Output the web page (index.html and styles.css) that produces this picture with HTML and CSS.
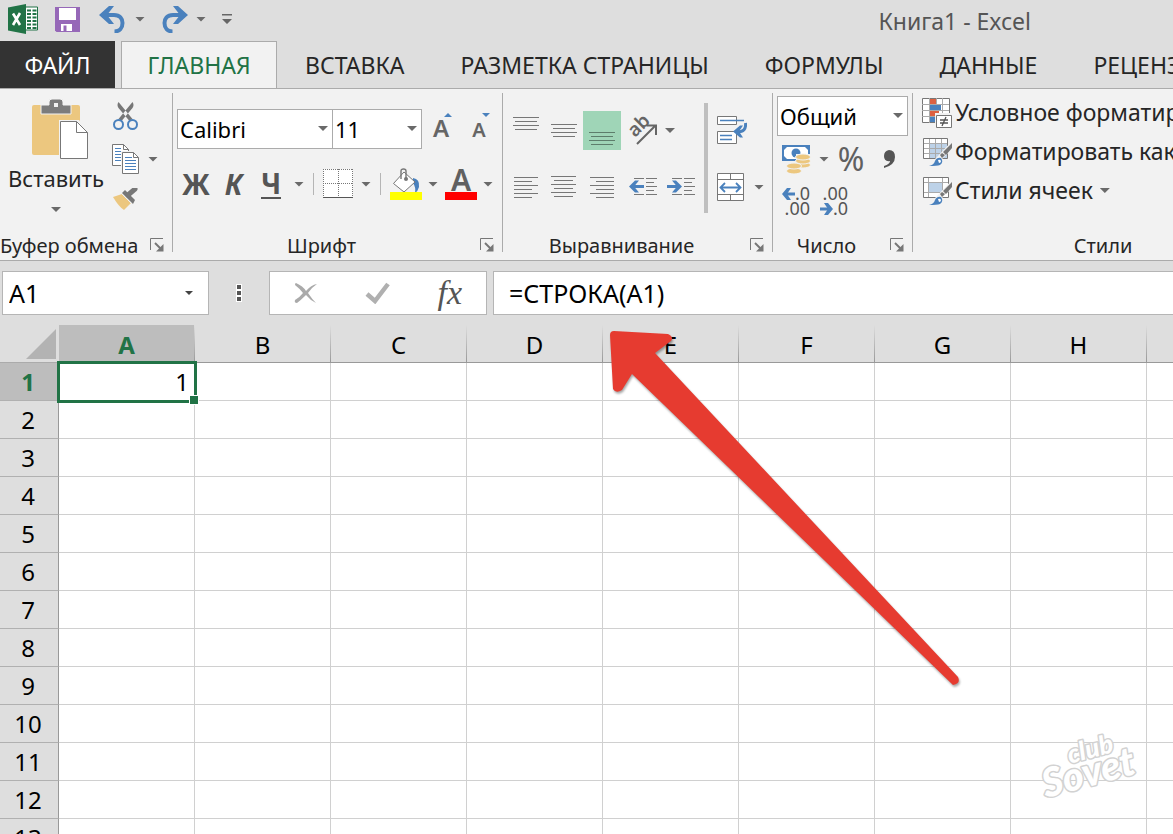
FILE: index.html
```html
<!DOCTYPE html>
<html lang="ru">
<head>
<meta charset="utf-8">
<title>Книга1 - Excel</title>
<link rel="stylesheet" href="styles.css">
</head>
<body>
<header class="titlebar">
  <div class="quick">
    <svg class="logo" width="30" height="30" viewBox="0 0 30 30" aria-hidden="true"><path d="M17 3h12.500v23H17z" fill="#fff" stroke="#217346"/><path d="M19 6.500h4M24.500 6.500h4M19 10h4M24.500 10h4M19 13.500h4M24.500 13.500h4M19 17h4M24.500 17h4M19 20.500h4M24.500 20.500h4M19 24h4M24.500 24h4" stroke="#217346" stroke-width="2"/><path d="M0 3.500 18 0v30L0 26.500z" fill="#217346"/><path d="m5 9.500 7 11.500M12 9 5 21" stroke="#fff" stroke-width="2.600"/></svg>
    <button class="icon-btn save" aria-label="Сохранить"><svg width="25" height="25" viewBox="0 0 25 25"><path d="M0 0h25v25H1.500L0 23.500z" fill="#9668b8"/><path d="M4 1h17v12H4zM6 17h11v7H6z" fill="#fff"/><path d="M8.500 18.500h3V24h-3z" fill="#9668b8"/></svg></button>
    <button class="icon-btn undo" aria-label="Отменить"><svg width="27" height="27" viewBox="0 0 27 27"><path d="M5 9h10c6 0 8.500 3.500 8.500 8 0 5-3 8.500-8 8.500" fill="none" stroke="#4a81bd" stroke-width="4"/><path d="m0 9 10-9h5L8 9l7 9h-5z" fill="#4a81bd"/></svg></button>
    <button class="icon-btn" aria-label="Список отмены"><i class="caret"></i></button>
    <button class="icon-btn redo" aria-label="Вернуть"><svg width="27" height="27" viewBox="0 0 27 27"><path d="M22 9H12c-6 0-8.500 3.500-8.500 8 0 5 3 8.500 8 8.500" fill="none" stroke="#4a81bd" stroke-width="4"/><path d="m27 9-10-9h-5l7 9-7 9h5z" fill="#4a81bd"/></svg></button>
    <button class="icon-btn" aria-label="Список возврата"><i class="caret"></i></button>
    <button class="icon-btn custom" aria-label="Настройка панели"><svg width="10" height="10" viewBox="0 0 10 10"><path d="M0 0h10v1.500H0zM0 5h10L5 10z" fill="#666"/></svg></button>
  </div>
  <h1 class="title">Книга1 - Excel</h1>
</header>
<nav class="tabs">
  <button class="tab file">ФАЙЛ</button>
  <button class="tab active">ГЛАВНАЯ</button>
  <button class="tab">ВСТАВКА</button>
  <button class="tab">РАЗМЕТКА СТРАНИЦЫ</button>
  <button class="tab">ФОРМУЛЫ</button>
  <button class="tab">ДАННЫЕ</button>
  <button class="tab">РЕЦЕНЗИРОВАНИЕ</button>
</nav>
<main class="app">
<div class="ribbon">
  <section class="group clipboard">
    <div class="tools">
      <button class="paste">
        <svg width="56" height="60" viewBox="0 0 56 60" aria-hidden="true"><path d="M2 6h44q2 0 2 2v48H2q-2 0-2-2V8q0-2 2-2z" fill="#ecc77f"/><path d="M9 15V6h8V3q0-3 3-3h8q3 0 3 3v3h8v9z" fill="#7c7c7c" stroke="#f2f2f2" stroke-width="1"/><path d="M22 4h4v4h-4z" fill="#f2f2f2"/><path d="M27 21h20l10 11v29H27z" fill="#f2f2f2"/><path d="M28.500 22.500h16l11 11v26h-27z" fill="#fff" stroke="#777"/><path d="M44.500 22.500v11h11" fill="none" stroke="#777"/></svg>
        <span>Вставить</span><i class="caret"></i>
      </button>
      <div class="clip-side">
        <button class="icon-btn" aria-label="Вырезать"><svg width="25" height="28" viewBox="0 0 25 28"><path d="M5.500 0q-2 3 0 6l11 13 3-2zM19.500 0q2 3 0 6l-11 13-3-2z" fill="#777"/><circle cx="5.500" cy="22.500" r="4.500" fill="#f2f2f2" stroke="#4a81bd" stroke-width="2"/><circle cx="19.500" cy="22.500" r="4.500" fill="#f2f2f2" stroke="#4a81bd" stroke-width="2"/></svg></button>
        <button class="icon-btn copy" aria-label="Копировать"><svg width="27" height="30" viewBox="0 0 27 30"><path d="M.5.5h11l5 5v16H.5z" fill="#fff" stroke="#777"/><path d="M11.500.5v5h5" fill="none" stroke="#777"/><path d="M3 4.500h6M3 7.500h6M3 10.500h6M3 13.500h6M3 16.500h6" stroke="#4a81bd"/><path d="M9 7h15v3h3v20H9z" fill="#f2f2f2"/><path d="M10.500 8.500h11l5 5v16h-16z" fill="#fff" stroke="#777"/><path d="M21.500 8.500v5h5" fill="none" stroke="#777"/><path d="M13 13.500h7M13 16.500h11M13 19.500h11M13 22.500h11M13 25.500h11" stroke="#4a81bd"/></svg><i class="caret"></i></button>
        <button class="icon-btn" aria-label="Формат по образцу"><svg width="25" height="22" viewBox="0 0 25 22"><path d="m0 9 9-3 9 9-7 7q-5-3-11-13z" fill="#ecc77f"/><path d="m9 5 3-3 10 10-2 4z" fill="#777"/><path d="m15 7 7-6" stroke="#777" stroke-width="5" stroke-linecap="round"/><path d="m9 6 9 9" stroke="#f2f2f2"/></svg></button>
      </div>
    </div>
    <footer class="caption"><span>Буфер обмена</span><button class="icon-btn launch" aria-label="Параметры буфера"><svg width="14" height="14" viewBox="0 0 14 14"><path d="M.5 12V.5H13" fill="none" stroke="#777"/><path d="m5 5 6 6" stroke="#777" stroke-width="2"/><path d="M13.500 6v7.500H6z" fill="#777"/></svg></button></footer>
  </section>

  <section class="group font">
    <div class="tools">
      <div class="font-top">
        <label class="combo"><select aria-label="Шрифт"><option>Calibri</option></select><i class="caret"></i></label>
        <label class="combo size"><select aria-label="Размер шрифта"><option>11</option></select><i class="caret"></i></label>
        <button class="icon-btn grow" aria-label="Увеличить размер"><b>A</b><svg width="8" height="4" viewBox="0 0 8 4"><path d="m0 4 4-4 4 4z" fill="#4a81bd"/></svg></button>
        <button class="icon-btn grow shrink" aria-label="Уменьшить размер"><b>A</b><svg width="8" height="4" viewBox="0 0 8 4"><path d="m0 0 4 4 4-4z" fill="#4a81bd"/></svg></button>
      </div>
      <div class="font-bottom">
        <button class="letter">Ж</button>
        <button class="letter italic">К</button>
        <button class="letter under">Ч</button>
        <button class="icon-btn" aria-label="Вид подчеркивания"><i class="caret"></i></button>
        <i class="sep"></i>
        <button class="icon-btn" aria-label="Границы"><svg width="30" height="30" viewBox="0 0 30 30"><path d="M0 0h30v29H0z" fill="#fff"/><path d="M0 .5h30M0 14.500h30M.5 0v29M15.500 0v29M29.500 0v29" stroke="#777" stroke-dasharray="1 1"/><path d="M0 28.500h30" stroke="#555"/></svg></button>
        <button class="icon-btn" aria-label="Виды границ"><i class="caret"></i></button>
        <i class="sep"></i>
        <button class="icon-btn" aria-label="Цвет заливки"><svg width="32" height="32" viewBox="0 0 32 32"><path d="M23 10q7 1 6 9-1 4-4 6 1-6-2-10z" fill="#4a81bd"/><path d="m14 4 11 10-11 10L3.500 15.500z" fill="#fff" stroke="#777"/><path d="M11 11V3q0-2 2.500-2T16 3v7" fill="none" stroke="#777" stroke-width="1.400"/><circle cx="16" cy="11" r="2" fill="#777"/><path d="M0 24h32v8H0z" fill="#ff0"/></svg></button>
        <button class="icon-btn" aria-label="Выбор заливки"><i class="caret"></i></button>
        <button class="icon-btn color" aria-label="Цвет текста"><b>A</b></button>
        <button class="icon-btn" aria-label="Выбор цвета"><i class="caret"></i></button>
      </div>
    </div>
    <footer class="caption"><span>Шрифт</span><button class="icon-btn launch" aria-label="Параметры шрифта"><svg width="14" height="14" viewBox="0 0 14 14"><path d="M.5 12V.5H13" fill="none" stroke="#777"/><path d="m5 5 6 6" stroke="#777" stroke-width="2"/><path d="M13.500 6v7.500H6z" fill="#777"/></svg></button></footer>
  </section>

  <section class="group align">
    <div class="tools align-tools">
      <div class="align-left">
        <div class="align-row">
          <button class="icon-btn" aria-label="По верхнему краю"><svg width="26" height="30" viewBox="0 0 26 30"><path d="M0 1.500h26M2 5.500h22M0 9.500h26M2 13.500h22" stroke="#777"/></svg></button>
          <button class="icon-btn" aria-label="По середине"><svg width="26" height="30" viewBox="0 0 26 30"><path d="M0 8.500h26M2 12.500h22M0 16.500h26M2 20.500h22" stroke="#777"/></svg></button>
          <button class="icon-btn pressed" aria-label="По нижнему краю"><svg width="26" height="30" viewBox="0 0 26 30"><path d="M0 16.500h26M2 20.500h22M0 24.500h26M2 28.500h22" stroke="#5d7d6b"/></svg></button>
          <button class="icon-btn" aria-label="Ориентация"><svg width="30" height="30" viewBox="0 0 30 30"><text class="ab" x="7" y="22" transform="rotate(-45 7 22)">ab</text><path d="M9 28 27 10M19 9.500h9V19" fill="none" stroke="#666" stroke-width="2"/></svg></button>
          <button class="icon-btn drop" aria-label="Выбор ориентации"><i class="caret"></i></button>
        </div>
        <div class="align-row">
          <button class="icon-btn" aria-label="По левому краю"><svg width="26" height="24" viewBox="0 0 26 24"><path d="M1 1.500h24M1 5.500h18M1 9.500h24M1 13.500h18M1 17.500h24M1 21.500h18" stroke="#777"/></svg></button>
          <button class="icon-btn" aria-label="По центру"><svg width="26" height="24" viewBox="0 0 26 24"><path d="M0 .5h25M3 4.500h19M0 8.500h25M3 12.500h19M0 16.500h25M3 20.500h19" stroke="#777"/></svg></button>
          <button class="icon-btn" aria-label="По правому краю"><svg width="26" height="24" viewBox="0 0 26 24"><path d="M1 1.500h24M7 5.500h18M1 9.500h24M7 13.500h18M1 17.500h24M7 21.500h18" stroke="#777"/></svg></button>
          <button class="icon-btn" aria-label="Уменьшить отступ"><svg width="30" height="24" viewBox="0 0 30 24"><path d="M6 2.500h10M18 2.500h11M18 6.500h8M18 10.500h11M18 14.500h8M6 18.500h10M18 18.500h11" stroke="#777"/><path d="M3 10.500h13" stroke="#4a81bd" stroke-width="3"/><path d="m1 10.500 6-6h4l-5 6 5 6H7z" fill="#4a81bd"/></svg></button>
          <button class="icon-btn" aria-label="Увеличить отступ"><svg width="30" height="24" viewBox="0 0 30 24"><path d="M6 2.500h10M18 2.500h11M18 6.500h8M18 10.500h11M18 14.500h8M6 18.500h10M18 18.500h11" stroke="#777"/><path d="M1 10.500h13" stroke="#4a81bd" stroke-width="3"/><path d="m16 10.500-6-6H6l5 6-5 6h4z" fill="#4a81bd"/></svg></button>
        </div>
      </div>
      <i class="divider"></i>
      <div class="align-right">
        <button class="icon-btn" aria-label="Перенести текст"><svg width="30" height="29" viewBox="0 0 30 29"><path d="M.5.500h19v8H.5zM.5 15.500h19v12H.5z" fill="#fff" stroke="#777"/><path d="M3 4.500h24M3 19.500h12M3 23.500h12" stroke="#4a81bd" stroke-width="1.400"/><path d="M28.500 7q1 9-8 9" fill="none" stroke="#4a81bd" stroke-width="3"/><path d="m16 15.500 7-6h3l-4 6 4 6h-3z" fill="#4a81bd"/></svg></button>
        <button class="icon-btn merge" aria-label="Объединить"><svg width="27" height="28" viewBox="0 0 27 28"><path d="M.5.500h26v27H.5zM.5 6.500h26M.5 21.500h26M13.500.5v6M13.500 21.500v6" fill="#fff" stroke="#777"/><path d="M4 14.500h19M8 10l-4.500 4.500L8 19M19 10l4.500 4.500L19 19" fill="none" stroke="#4a81bd" stroke-width="1.800"/></svg><i class="caret"></i></button>
      </div>
    </div>
    <footer class="caption"><span>Выравнивание</span><button class="icon-btn launch" aria-label="Параметры выравнивания"><svg width="14" height="14" viewBox="0 0 14 14"><path d="M.5 12V.5H13" fill="none" stroke="#777"/><path d="m5 5 6 6" stroke="#777" stroke-width="2"/><path d="M13.500 6v7.500H6z" fill="#777"/></svg></button></footer>
  </section>

  <section class="group number">
    <div class="tools">
      <label class="combo"><select aria-label="Числовой формат"><option>Общий</option></select><i class="caret"></i></label>
      <div class="number-row">
        <button class="icon-btn money" aria-label="Финансовый формат"><svg width="29" height="29" viewBox="0 0 29 29"><path d="M0 0h28v16H0z" fill="#4a81bd"/><path d="M5 2h18l3 3v6l-3 3H5l-3-3V5z" fill="#fff"/><circle cx="14" cy="8" r="4.500" fill="#4a81bd"/><path d="M14 9h15v13h-9v7H5V17h9z" fill="#f2f2f2"/><g fill="#ecc77f" stroke="#f2f2f2"><ellipse cx="21" cy="20" rx="7.500" ry="3"/><ellipse cx="21" cy="16" rx="7.500" ry="3"/><ellipse cx="21" cy="12" rx="7.500" ry="3"/><ellipse cx="12" cy="26" rx="7.500" ry="3"/><ellipse cx="12" cy="21" rx="7.500" ry="3"/></g></svg><i class="caret"></i></button>
        <button class="icon-btn percent">%</button>
        <button class="icon-btn" aria-label="Формат с разделителями"><svg width="13" height="19" viewBox="0 0 13 19"><path d="M6 0q6 0 6 7 0 8-11 11v-2q6-2 6-5-6 1-6-5 0-5 5-6z" fill="#555"/></svg></button>
      </div>
      <div class="decimals">
        <button class="icon-btn dec"><span><svg width="13" height="12" viewBox="0 0 13 12"><path d="M2 6h11" stroke="#4a81bd" stroke-width="3"/><path d="m0 6 5-6h4L5 6l4 6H5z" fill="#4a81bd"/></svg>.0</span><span>.00</span></button>
        <button class="icon-btn dec"><span>.00</span><span><svg width="13" height="12" viewBox="0 0 13 12"><path d="M0 6h11" stroke="#4a81bd" stroke-width="3"/><path d="M13 6 8 0H4l4 6-4 6h4z" fill="#4a81bd"/></svg>.0</span></button>
      </div>
    </div>
    <footer class="caption"><span>Число</span><button class="icon-btn launch" aria-label="Параметры числа"><svg width="14" height="14" viewBox="0 0 14 14"><path d="M.5 12V.5H13" fill="none" stroke="#777"/><path d="m5 5 6 6" stroke="#777" stroke-width="2"/><path d="M13.500 6v7.500H6z" fill="#777"/></svg></button></footer>
  </section>

  <section class="group styles">
    <div class="tools">
      <button class="style-btn"><svg width="30" height="30" viewBox="0 0 30 30" aria-hidden="true"><path d="M.5.500h27v24H.5z" fill="#fff" stroke="#777"/><path d="M7.500 0v25M14.500 0v25M20.500 0v25M0 6.500h27M0 12.500h27M0 18.500h27" stroke="#aaa"/><path d="M8 1h6v5H8zM8 13h9v5H8z" fill="#dc6141"/><path d="M8 7h11v5H8zM8 19h6v5H8z" fill="#4a81bd"/><path d="M13 15h17v15H13z" fill="#f2f2f2"/><path d="M14.500 17.500h15v12h-15z" fill="#fff" stroke="#777"/><path d="M18 22h8M18 25h8M24 19l-4 9" stroke="#555" stroke-width="1.300"/></svg><span>Условное форматирование</span></button>
      <button class="style-btn"><svg width="30" height="30" viewBox="0 0 30 30" aria-hidden="true"><path d="M1.500 1.500h24v20h-24z" fill="#fff" stroke="#777"/><path d="M7 7h18v14H7z" fill="#bdd2e8"/><path d="M7.500 2v19M13.500 2v19M19.500 2v19M2 6.500h23M2 11.500h23M2 16.500h23" stroke="#aaa"/><path d="M30 4v8L19 23q-3 6-13 6l8-8z" fill="#f2f2f2"/><path d="m30 6-9 9 3 3 6-7zM20 16l-2 2 2 3 3-3z" fill="#777"/><path d="M7 29q5-1 6-5 2-4 6-3 3 4-1 7-3 1-11 1z" fill="#4a81bd"/><path d="M16 23q2-1 3 1 0 2-2 2z" fill="#fff"/></svg><span>Форматировать как таблицу</span></button>
      <button class="style-btn"><svg width="30" height="30" viewBox="0 0 30 30" aria-hidden="true"><path d="M1.500 1.500h25v20h-25z" fill="#fff" stroke="#777"/><path d="M7 6h14v11H7z" fill="#bdd2e8"/><path d="M6.500 2v19M20.500 2v19M2 6.500h24M2 16.500h24" stroke="#aaa"/><path d="M30 4v8L19 23q-3 6-13 6l8-8z" fill="#f2f2f2"/><path d="m30 6-9 9 3 3 6-7zM20 16l-2 2 2 3 3-3z" fill="#777"/><path d="M7 29q5-1 6-5 2-4 6-3 3 4-1 7-3 1-11 1z" fill="#4a81bd"/><path d="M16 23q2-1 3 1 0 2-2 2z" fill="#fff"/></svg><span>Стили ячеек</span><i class="caret"></i></button>
    </div>
    <footer class="caption"><span>Стили</span></footer>
  </section>
</div>

<div class="formula-bar">
  <div class="namebox"><input aria-label="Имя ячейки" value="A1"><button class="icon-btn" aria-label="Список имен"><i class="caret dark"></i></button></div>
  <svg class="grip" width="6" height="18" viewBox="0 0 6 18" aria-hidden="true"><path d="M0 0h6v18H0z" fill="#fff"/><path d="M1 1h4v4H1zM1 7h4v4H1zM1 13h4v4H1z" fill="#555"/></svg>
  <div class="entry">
    <button class="icon-btn" aria-label="Отмена"><svg width="24" height="22" viewBox="0 0 24 22"><path d="M2 1q7 3 10 8Q17 3 23 2q-6 4-9 9 4 6 8 10-6-3-10-8-5 5-9 8-3 0-2-3 5-3 8-7-4-5-8-8 0-2 1-2z" fill="#aaa"/></svg></button>
    <button class="icon-btn" aria-label="Ввод"><svg width="26" height="22" viewBox="0 0 26 22"><path d="m2 12 8 7L23 2" fill="none" stroke="#b0b0b0" stroke-width="4.500"/></svg></button>
    <button class="icon-btn fx">fx</button>
  </div>
  <input class="formula" aria-label="Строка формул" value="=СТРОКА(A1)">
</div>

<div class="sheet">
<table>
<colgroup><col class="col-num"><col><col><col><col><col><col><col><col><col></colgroup>
<thead><tr><th class="corner"><svg width="30" height="30" viewBox="0 0 30 30" aria-hidden="true"><path d="M30 0v30H0z" fill="#b3b3b3"/></svg></th><th class="on">A</th><th>B</th><th>C</th><th>D</th><th>E</th><th>F</th><th>G</th><th>H</th><th>I</th></tr></thead>
<tbody>
<tr><th class="on">1</th><td class="cell-on">1<i class="handle"></i></td><td></td><td></td><td></td><td></td><td></td><td></td><td></td><td></td></tr>
<tr><th>2</th><td></td><td></td><td></td><td></td><td></td><td></td><td></td><td></td><td></td></tr>
<tr><th>3</th><td></td><td></td><td></td><td></td><td></td><td></td><td></td><td></td><td></td></tr>
<tr><th>4</th><td></td><td></td><td></td><td></td><td></td><td></td><td></td><td></td><td></td></tr>
<tr><th>5</th><td></td><td></td><td></td><td></td><td></td><td></td><td></td><td></td><td></td></tr>
<tr><th>6</th><td></td><td></td><td></td><td></td><td></td><td></td><td></td><td></td><td></td></tr>
<tr><th>7</th><td></td><td></td><td></td><td></td><td></td><td></td><td></td><td></td><td></td></tr>
<tr><th>8</th><td></td><td></td><td></td><td></td><td></td><td></td><td></td><td></td><td></td></tr>
<tr><th>9</th><td></td><td></td><td></td><td></td><td></td><td></td><td></td><td></td><td></td></tr>
<tr><th>10</th><td></td><td></td><td></td><td></td><td></td><td></td><td></td><td></td><td></td></tr>
<tr><th>11</th><td></td><td></td><td></td><td></td><td></td><td></td><td></td><td></td><td></td></tr>
<tr><th>12</th><td></td><td></td><td></td><td></td><td></td><td></td><td></td><td></td><td></td></tr>
<tr><th>13</th><td></td><td></td><td></td><td></td><td></td><td></td><td></td><td></td><td></td></tr>
</tbody>
</table>
<svg class="pointer" width="360" height="370" viewBox="600 320 360 370" aria-hidden="true"><path d="M614 331 668 334q6 3 3 7l-16 12L958 677q3 7-5 8L632 374l-10 16q-6 4-9-1l-3-54q0-4 4-4z" fill="#e63b30"/></svg>
<svg class="watermark" width="110" height="76" viewBox="0 0 110 76" aria-label="club Sovet"><g transform="rotate(-15 12 68)"><text class="sovet" x="12" y="68">Sovet</text><text class="club" x="44" y="41">club</text></g></svg>
</div>
</main>
</body>
</html>
```
FILE: styles.css
```css
* { box-sizing: border-box; }
body {
  margin: 0;
  height: 100vh;
  display: flex;
  flex-direction: column;
  overflow: hidden;
  background: #dedede;
  color: #262626;
  font-family: "Noto Sans", "Open Sans", sans-serif;
  font-size: 22px;
}
button, input, select { font: inherit; color: inherit; border: 0; padding: 0; margin: 0; background: none; border-radius: 0; }
svg { display: block; flex: none; }
.icon-btn { display: flex; align-items: center; justify-content: center; flex: none; }
.caret { display: block; flex: none; width: 10px; height: 5px; background: #6a6a6a; clip-path: polygon(0 0, 100% 0, 50% 100%); }
.caret.dark { width: 8px; height: 4px; background: #444; }

.titlebar { display: flex; justify-content: space-between; height: 41px; flex: none; padding: 0 142px 0 8px; }
.quick { display: flex; align-items: center; height: 38px; }
.save { margin-left: 17px; }
.undo { margin: 0 9px 0 19px; }
.redo { margin: 0 8px 0 16px; }
.custom { margin-left: 16px; }
.title { margin: 0; font-size: 23px; font-weight: 400; line-height: 43px; color: #555; white-space: nowrap; }

.tabs { display: flex; flex: none; height: 48px; overflow: hidden; border-bottom: 1px solid #ababab; font-size: 23px; }
.tab { flex: none; padding: 0 28px; line-height: 48px; white-space: nowrap; }
.tab.file { width: 115px; padding: 0; margin-right: 6px; background: #333; color: #fff; }
.tab.active { width: 156px; padding: 0; line-height: 46px; background: #f2f2f2; border: 1px solid #ababab; border-bottom: 0; color: #217346; }

.app { flex: 1; min-height: 0; display: flex; flex-direction: column; }
.ribbon { display: flex; flex: none; height: 172px; overflow: hidden; background: #f2f2f2; border-bottom: 1px solid #ababab; }
.group { flex: none; display: flex; flex-direction: column; position: relative; padding-bottom: 1px; }
.group::after { content: ""; position: absolute; right: 0; top: 4px; bottom: 8px; width: 1px; background: #ababab; }
.tools { flex: 1; }
.caption { display: flex; align-items: center; height: 28px; font-size: 20px; white-space: nowrap; }
.caption span { flex: 1; text-align: center; }
.launch { margin: 0 9px 0 10px; }
.styles .caption { font-size: 20px; }

.clipboard { width: 173px; }
.clipboard .tools { display: flex; }
.clipboard .caption span { text-align: left; }
.paste { width: 112px; display: flex; flex-direction: column; align-items: center; padding-top: 10px; }
.paste span { line-height: 38px; }
.paste .caret { margin-top: 10px; }
.paste svg { margin-left: 8px; }
.clip-side { display: flex; flex-direction: column; align-items: flex-start; gap: 14px; padding-top: 13px; }
.clip-side .icon-btn { min-width: 27px; }
.copy { gap: 9px; }

.font { width: 330px; }
.font-top { display: flex; padding: 20px 0 0 4px; }
.combo { position: relative; display: block; width: 156px; height: 40px; flex: none; }
.combo select { appearance: none; width: 100%; height: 100%; padding-left: 2px; background: #fff; border: 1px solid #ababab; color: #000; }
.combo .caret { position: absolute; right: 5px; top: 17px; pointer-events: none; }
.combo.size { width: 90px; margin-left: -1px; }
.grow { width: 22px; height: 30px; margin-left: 8px; align-items: flex-start; position: relative; }
.grow b { font-size: 24px; line-height: 38px; font-weight: 600; color: #666; }
.grow svg { position: absolute; right: 0; top: 4px; }
.shrink { margin-left: 16px; }
.shrink b { font-size: 20px; line-height: 42px; }
.font-bottom { display: grid; grid-template-columns: 38px 37px 38px 18px 10px 40px 16px 12px 40px 14px 42px 12px; align-items: center; justify-items: center; height: 38px; margin-top: 16px; padding-left: 4px; }
.letter { font-weight: 700; font-size: 28px; line-height: 32px; color: #555; }
.italic { font-style: italic; }
.under { border-bottom: 2px solid #555; line-height: 28px; }
.sep { width: 1px; height: 22px; background: #b5b5b5; }
.color { width: 32px; height: 32px; border-bottom: 8px solid #f00; }
.color b { font-size: 30px; line-height: 24px; font-weight: 600; color: #606060; }

.align { width: 270px; }
.align-tools { display: flex; }
.align-left { width: 198px; padding: 22px 0 0 4px; display: flex; flex-direction: column; gap: 18px; }
.align-row { display: grid; grid-template-columns: 38px 38px 38px 44px 32px; height: 39px; align-items: center; }
.drop { justify-content: flex-start; }
.pressed { height: 39px; background: #9fd5b7; }
.ab { font-size: 19px; font-weight: 600; fill: #666; }
.divider { width: 4px; height: 110px; margin-top: 14px; background: #bfbfbf; margin-left: 3px; }
.align-right { display: flex; flex-direction: column; align-items: flex-start; gap: 28px; padding: 27px 0 0 9px; }
.merge { gap: 10px; }

.number { width: 140px; }
.number .combo { width: 131px; margin: 7px 0 0 4px; }
.number-row { display: flex; align-items: center; height: 46px; padding-left: 9px; }
.money { gap: 8px; }
.percent { width: 44px; font-size: 32px; line-height: 40px; color: #606060; }
.number-row .icon-btn:last-child { margin-left: 10px; }
.decimals { display: flex; gap: 10px; padding: 4px 0 0 9px; }
.dec { flex-direction: column; align-items: flex-end; width: 28px; font-size: 18px; line-height: 15px; color: #555; }
.dec span { display: flex; align-items: center; }

.styles { width: 380px; }
.styles .tools { padding: 4px 0 0 9px; font-size: 23px; }
.style-btn { display: flex; align-items: center; gap: 3px; height: 39px; white-space: nowrap; }
.style-btn span { line-height: 36px; padding-bottom: 2px; }
.style-btn .caret { margin-left: 4px; }

.formula-bar { display: flex; align-items: center; flex: none; height: 64px; padding: 0 0 0 2px; color: #000; }
.namebox, .entry, .formula { height: 44px; background: #fff; border: 1px solid #b5b5b5; }
.namebox { width: 207px; display: flex; padding: 0 15px 0 6px; }
.namebox input { flex: 1; min-width: 0; font-size: 25px; }
.grip { margin: 0 27px; }
.entry { width: 218px; display: flex; align-items: center; justify-content: space-between; padding: 0 24px; }
.fx { font: italic 34px "Liberation Serif", serif; color: #555; }
.formula { flex: 1; min-width: 0; margin-left: 6px; padding-left: 15px; border-right: 0; font-size: 25px; }

.sheet { flex: 1; min-height: 0; position: relative; overflow: hidden; background: #fff; color: #000; font-size: 24px; }
table { border-collapse: separate; border-spacing: 0; table-layout: fixed; width: 1283px; }
.col-num { width: 59px; }
tr { height: 38px; }
th, td { height: 38px; padding: 0; font-weight: 400; line-height: 36px; }
td { border-right: 1px solid #d0d0d0; border-bottom: 1px solid #d0d0d0; }
th { background: #dedede; }
thead th { padding: 3px 1px 0 0; line-height: 32px; border-bottom: 1px solid #999; background-image: linear-gradient(#dedede, #999); background-size: 1px 100%; background-position: right; background-repeat: no-repeat; }
tbody th { border-right: 1px solid #999; border-bottom: 1px solid #b0b0b0; padding-right: 2px; }
thead .corner { padding: 4px 3px 3px 26px; background-image: none; border-bottom-color: #ababab; }
th.on { background-color: #bdbdbd; color: #217346; font-weight: 700; }
.cell-on { position: relative; text-align: right; padding-right: 5px; }
.cell-on::before { content: ""; position: absolute; inset: -2px -3px -3px -2px; border: 3px solid #217346; }
.handle { position: absolute; right: -5px; bottom: -5px; width: 10px; height: 10px; background: #217346; border: 1px solid #fff; }
.pointer { position: absolute; left: 600px; top: -5px; filter: drop-shadow(1px 2px 1px rgba(0, 0, 0, .35)); }
.watermark { position: absolute; right: 29px; bottom: 28px; overflow: visible; }
.sovet, .club { font-family: Lato, sans-serif; font-style: italic; font-weight: 900; fill: #fff; stroke: #d2d2d2; stroke-width: 3px; paint-order: stroke; stroke-linejoin: round; }
.sovet { font-size: 40px; }
.club { font-size: 26px; }
```
